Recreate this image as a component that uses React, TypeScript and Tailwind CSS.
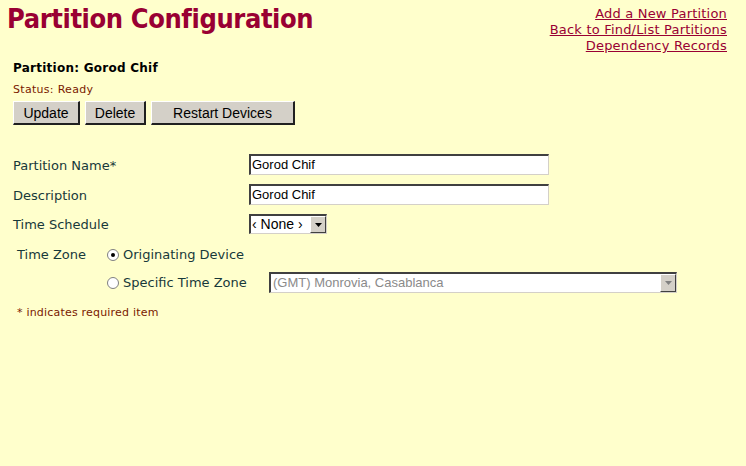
import React from "react";

const labelCls = "text-[13px] text-[#17393a] pt-[2px]";
const boxCls =
  "bg-white border-t-2 border-l-2 border-t-[#404040] border-l-[#404040] border-r border-b border-r-[#d4d0c8] border-b-[#d4d0c8] text-[13px]";
const arial = { fontFamily: '"Liberation Sans", Arial, sans-serif' };

function Btn({ children, w }: { children: React.ReactNode; w: string }) {
  return (
    <button
      className={`${w} h-[24px] bg-[#d4d0c8] text-[14px] text-black border-t border-l border-t-white border-l-white border-r-2 border-b-2 border-r-[#202020] border-b-[#202020] leading-none`}
      style={arial}
    >
      {children}
    </button>
  );
}

function DropArrow({ disabled }: { disabled?: boolean }) {
  return (
    <div className="w-[16px] h-full bg-[#d4d0c8] flex items-center justify-center border-t border-l border-white border-r border-b border-r-[#404040] border-b-[#404040]">
      <svg width="7" height="4" viewBox="0 0 7 4">
        <path d="M0 0h7L3.5 4z" fill={disabled ? "#808080" : "#000"} />
      </svg>
    </div>
  );
}

export default function App() {
  return (
    <div
      className="w-[746px] h-[466px] bg-[#ffffcc] relative"
      style={{ fontFamily: '"DejaVu Sans", Verdana, sans-serif' }}
    >
      <div className="flex justify-between pl-[7px] pr-[19px] pt-[3px]">
        <h1
          className="text-[27px] font-bold text-[#990033] leading-[32px] tracking-[-0.4px]"
          style={{ fontFamily: '"DejaVu Sans Condensed", "DejaVu Sans", sans-serif' }}
        >
          Partition Configuration
        </h1>
        <div className="flex flex-col items-end text-[13px] leading-[16px] tracking-[0.2px] text-[#990033] pt-[3px]">
          <a className="underline">Add a New Partition</a>
          <a className="underline">Back to Find/List Partitions</a>
          <a className="underline">Dependency Records</a>
        </div>
      </div>

      <div className="pl-[13px] pt-[5px]">
        <div className="text-[12px] font-bold text-black leading-[18px] tracking-[0.25px]">Partition: Gorod Chif</div>
        <div className="text-[11px] text-[#7a1a00] leading-[14px] mt-[6px] tracking-[0.3px]">Status: Ready</div>
        <div className="flex gap-[5px] mt-[4px]">
          <Btn w="w-[67px]">Update</Btn>
          <Btn w="w-[61px]">Delete</Btn>
          <Btn w="w-[144px]">Restart Devices</Btn>
        </div>

        <div className="mt-[29px] flex flex-col gap-[9px]">
          <div className="flex items-center h-[21px]">
            <div className={`w-[236px] ${labelCls}`}>Partition Name*</div>
            <div className={`w-[300px] h-[21px] ${boxCls} text-black pl-[1px] leading-[18px]`} style={arial}>
              Gorod Chif
            </div>
          </div>
          <div className="flex items-center h-[21px]">
            <div className={`w-[236px] ${labelCls}`}>Description</div>
            <div className={`w-[300px] h-[21px] ${boxCls} text-black pl-[1px] leading-[18px]`} style={arial}>
              Gorod Chif
            </div>
          </div>
          <div className="flex items-center h-[20px]">
            <div className={`w-[236px] ${labelCls}`}>Time Schedule</div>
            <div className={`w-[78px] h-[20px] ${boxCls} flex text-black`} style={arial}>
              <span className="flex-1 pl-[1px] leading-[16px] text-[14px]">&lsaquo; None &rsaquo;</span>
              <DropArrow />
            </div>
          </div>
        </div>

        <div className="mt-[11px] pl-[4px] flex flex-col gap-[7px]">
          <div className="flex items-center h-[20px]">
            <div className={`w-[90px] text-[13px] text-[#17393a]`}>Time Zone</div>
            <div className="flex items-center gap-[4px]">
              <span className="w-[12px] h-[12px] rounded-full bg-white border border-[#808080] flex items-center justify-center">
                <span className="w-[4px] h-[4px] rounded-full bg-black" />
              </span>
              <span className="text-[13px] text-[#17393a]">Originating Device</span>
            </div>
          </div>
          <div className="flex items-center h-[21px]">
            <div className="w-[90px]" />
            <div className="flex items-center gap-[4px] w-[162px]">
              <span className="w-[12px] h-[12px] rounded-full bg-white border border-[#808080]" />
              <span className="text-[13px] text-[#17393a]">Specific Time Zone</span>
            </div>
            <div className={`w-[408px] h-[21px] ${boxCls} flex text-[#8a8a8a]`} style={arial}>
              <span className="flex-1 pl-[2px] leading-[17px]">(GMT) Monrovia, Casablanca</span>
              <DropArrow disabled />
            </div>
          </div>
          <div className="text-[11px] text-[#7a1a00] mt-[6px] leading-[14px] tracking-[0.2px]">* indicates required item</div>
        </div>
      </div>
    </div>
  );
}
